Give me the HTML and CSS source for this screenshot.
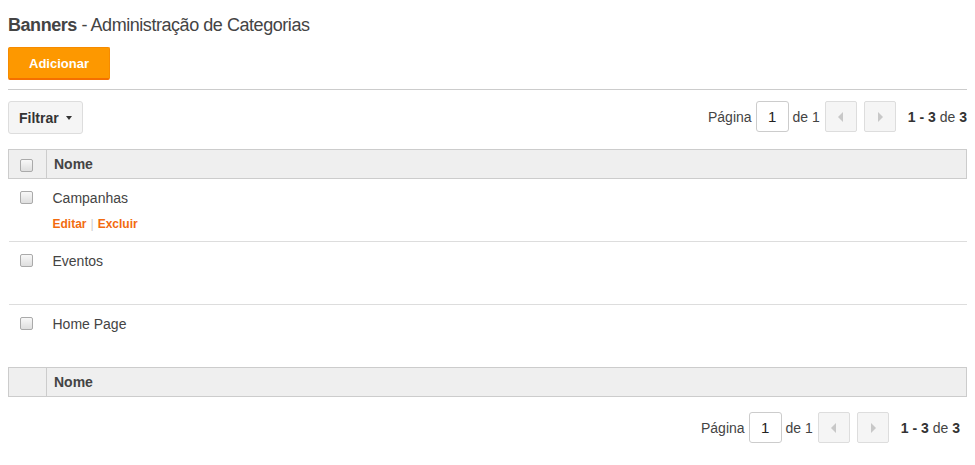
FILE: index.html
```html
<!DOCTYPE html>
<html lang="pt-BR">
<head>
<meta charset="utf-8">
<title>Banners - Administração de Categorias</title>
<link rel="stylesheet" href="styles.css">
</head>
<body>
<h1 class="title"><strong>Banners</strong> - Administração de Categorias</h1>
<div class="actions">
  <button class="btn-add">Adicionar</button>
</div>
<div class="toolbar">
  <button class="btn-filter">Filtrar <span class="caret"></span></button>
  <div class="pager">
    <span class="lbl">Página</span>
    <span class="page-input">1</span>
    <span class="lbl">de 1</span>
    <span class="nav-btn prev"><svg width="6" height="10" viewBox="0 0 6 10"><path d="M5 0 L0 5 L5 10 Z" fill="#c8c8c8"/></svg></span>
    <span class="nav-btn next"><svg width="6" height="10" viewBox="0 0 6 10"><path d="M1 0 L6 5 L1 10 Z" fill="#c8c8c8"/></svg></span>
    <span class="count"><b>1 - 3</b> de <b>3</b></span>
  </div>
</div>
<table class="grid">
  <thead>
    <tr><th class="chk"><span class="cb"></span></th><th>Nome</th></tr>
  </thead>
  <tbody>
    <tr>
      <td class="chk"><span class="cb"></span></td>
      <td><div class="name">Campanhas</div><div class="links"><a>Editar</a><span class="sep">|</span><a>Excluir</a></div></td>
    </tr>
    <tr>
      <td class="chk"><span class="cb"></span></td>
      <td><div class="name">Eventos</div><div class="links hidden"><a>Editar</a><span class="sep">|</span><a>Excluir</a></div></td>
    </tr>
    <tr>
      <td class="chk"><span class="cb"></span></td>
      <td><div class="name">Home Page</div><div class="links hidden"><a>Editar</a><span class="sep">|</span><a>Excluir</a></div></td>
    </tr>
  </tbody>
  <tfoot>
    <tr><th class="chk"></th><th>Nome</th></tr>
  </tfoot>
</table>
<div class="bottom-bar">
  <div class="pager">
    <span class="lbl">Página</span>
    <span class="page-input">1</span>
    <span class="lbl">de 1</span>
    <span class="nav-btn prev"><svg width="6" height="10" viewBox="0 0 6 10"><path d="M5 0 L0 5 L5 10 Z" fill="#c8c8c8"/></svg></span>
    <span class="nav-btn next"><svg width="6" height="10" viewBox="0 0 6 10"><path d="M1 0 L6 5 L1 10 Z" fill="#c8c8c8"/></svg></span>
    <span class="count"><b>1 - 3</b> de <b>3</b></span>
  </div>
</div>
</body>
</html>
```
FILE: styles.css
```css
body {
  margin: 8px;
  font-family: "Liberation Sans", Arial, sans-serif;
  color: #444;
  background: #fff;
}
.title {
  margin: 0;
  padding-top: 7px;
  font-size: 18px;
  font-weight: normal;
  letter-spacing: -0.45px;
  line-height: 20px;
  color: #444;
}
.title strong { font-weight: bold; }
.actions {
  padding-top: 12px;
  padding-bottom: 9px;
  border-bottom: 1px solid #ccc;
}
.btn-add {
  display: block;
  width: 102px;
  height: 33px;
  background: #fd9800;
  border: 1px solid #f68b00;
  border-bottom: 2px solid #f57000;
  border-radius: 2px;
  color: #fff;
  font-family: "Liberation Sans", Arial, sans-serif;
  font-weight: bold;
  font-size: 13px;
  padding: 0;
}
.toolbar {
  display: flex;
  justify-content: space-between;
  align-items: flex-start;
  margin-top: 11px;
}
.btn-filter {
  display: flex;
  align-items: center;
  gap: 7px;
  height: 33px;
  padding: 0 10px;
  background: #f5f5f5;
  border: 1px solid #ddd;
  border-radius: 3px;
  font-family: "Liberation Sans", Arial, sans-serif;
  font-weight: bold;
  font-size: 14px;
  color: #333;
}
.caret {
  width: 0;
  height: 0;
  border-left: 3px solid transparent;
  border-right: 3px solid transparent;
  border-top: 4px solid #333;
}
.pager {
  display: flex;
  align-items: center;
  font-size: 14px;
  color: #444;
}
.pager .lbl { margin-right: 4px; }
.page-input {
  width: 31px;
  height: 29px;
  border: 1px solid #ccc;
  border-radius: 3px;
  display: flex;
  align-items: center;
  justify-content: center;
  color: #222;
  font-size: 15px;
  margin-right: 4px;
  background: #fff;
}
.nav-btn {
  width: 30px;
  height: 29px;
  border: 1px solid #ddd;
  border-radius: 2px;
  background: #f5f5f5;
  display: flex;
  align-items: center;
  justify-content: center;
}
.nav-btn.prev { margin-left: 1px; }
.nav-btn.next { margin-left: 7px; }
.count {
  margin-left: 12px;
  color: #444;
}
.count b { color: #333; }
.grid {
  width: 100%;
  margin-top: 15px;
  border-collapse: collapse;
  font-size: 14px;
}
.grid th {
  background: #efefef;
  border: 1px solid #ccc;
  text-align: left;
  font-weight: bold;
  color: #444;
  height: 28px;
  padding: 0 0 0 7px;
  vertical-align: middle;
}
.grid th.chk, .grid td.chk {
  width: 26px;
  padding: 0 0 0 11px;
  text-align: left;
}
.grid thead th.chk .cb { margin-top: 2px; }
.grid td {
  border-bottom: 1px solid #ddd;
  height: 63px;
  vertical-align: top;
  padding: 11px 0 0 6px;
  box-sizing: border-box;
}
.grid tbody tr:last-child td { border-bottom: 1px solid #ccc; }
.grid td.chk { padding-top: 12px; }
.cb {
  display: block;
  width: 11px;
  height: 11px;
  border: 1px solid #aaa;
  border-radius: 2px;
  background: linear-gradient(#f8f8f8, #dedede);
}
.name {
  color: #444;
  line-height: 16px;
}
.links {
  margin-top: 11px;
  font-size: 12px;
  font-weight: bold;
  line-height: 14px;
}
.links a { color: #f26b0f; }
.links .sep { color: #ccc; font-weight: normal; margin: 0 4px; }
.links.hidden { visibility: hidden; }
.grid tfoot th { height: 28px; }
.bottom-bar {
  display: flex;
  justify-content: flex-end;
  padding-right: 7px;
  margin-top: 15px;
}
```
